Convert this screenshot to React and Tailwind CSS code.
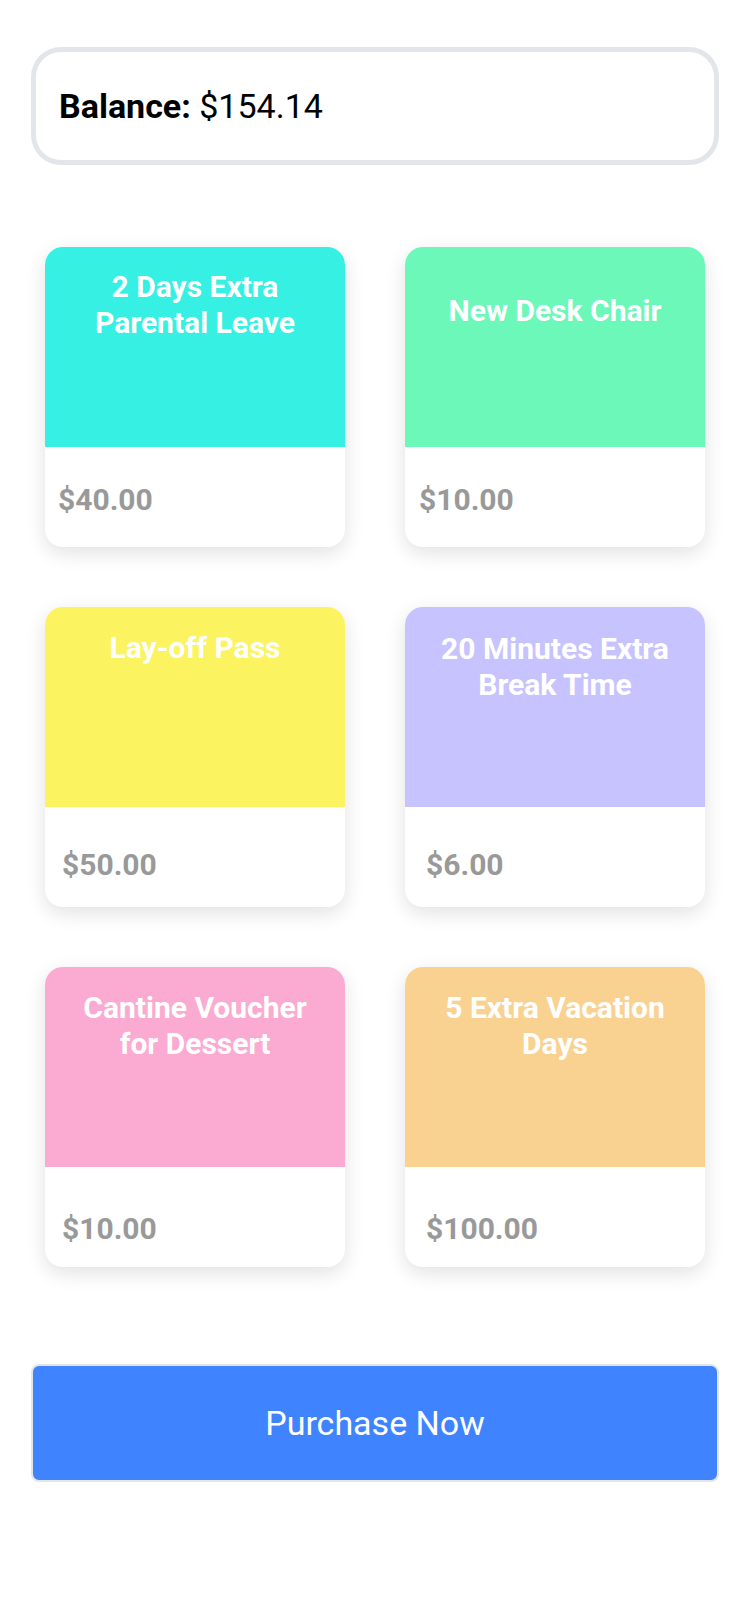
const rewards = [
  { title: '2 Days Extra Parental Leave', price: '$40.00', bg: 'bg-[#37f0e4]', titlePad: 'pt-[22px]', pricePad: 'pl-[13px] pt-[5px]' },
  { title: 'New Desk Chair', price: '$10.00', bg: 'bg-[#6cf8b9]', titlePad: 'pt-[46px]', pricePad: 'pl-[14px] pt-[5px]' },
  { title: 'Lay-off Pass', price: '$50.00', bg: 'bg-[#fbf360]', titlePad: 'pt-[23px]', pricePad: 'pl-[17px] pt-[14px]' },
  { title: '20 Minutes Extra Break Time', price: '$6.00', bg: 'bg-[#c6c3fe]', titlePad: 'pt-[24px]', pricePad: 'pl-[21px] pt-[14px]' },
  { title: 'Cantine Voucher for Dessert', price: '$10.00', bg: 'bg-[#fbaad1]', titlePad: 'pt-[23px]', pricePad: 'pl-[17px] pt-[22px]' },
  { title: '5 Extra Vacation Days', price: '$100.00', bg: 'bg-[#f9d292]', titlePad: 'pt-[23px]', pricePad: 'pl-[21px] pt-[22px]' },
];

const RewardCard = ({ reward }) => (
  <div className="w-[300px] h-[300px] rounded-[18px] overflow-hidden bg-white shadow-[0_6px_20px_rgba(0,0,0,0.12)] flex flex-col">
    <div className={`h-[200px] ${reward.bg} px-7 ${reward.titlePad}`}>
      <h3 className="text-white font-bold text-[30px] leading-[36px] text-center">{reward.title}</h3>
    </div>
    <div className={`flex-1 flex items-center ${reward.pricePad}`}>
      <span className="text-[#999999] font-bold text-[30px]">{reward.price}</span>
    </div>
  </div>
);

export default function App() {
  return (
    <div className="min-h-[1624px] bg-white font-['Roboto',sans-serif] px-[31px] pt-[47px]">
      {/* Balance */}
      <div className="h-[118px] border-[5px] border-[#e2e6ea] rounded-[30px] flex items-center px-[23px]">
        <p className="text-[34px] text-black">
          <span className="font-bold">Balance:</span> $154.14
        </p>
      </div>

      {/* Rewards */}
      <div className="grid grid-cols-[300px_300px] gap-x-[60px] gap-y-[60px] justify-center mt-[82px]">
        {rewards.map((r) => (
          <RewardCard key={r.title} reward={r} />
        ))}
      </div>

      <button className="mt-[97px] w-full h-[118px] bg-[#3f83fe] border-2 border-[#e2e6ea] rounded-[8px] text-white text-[34px]">
        Purchase Now
      </button>
    </div>
  );
}
